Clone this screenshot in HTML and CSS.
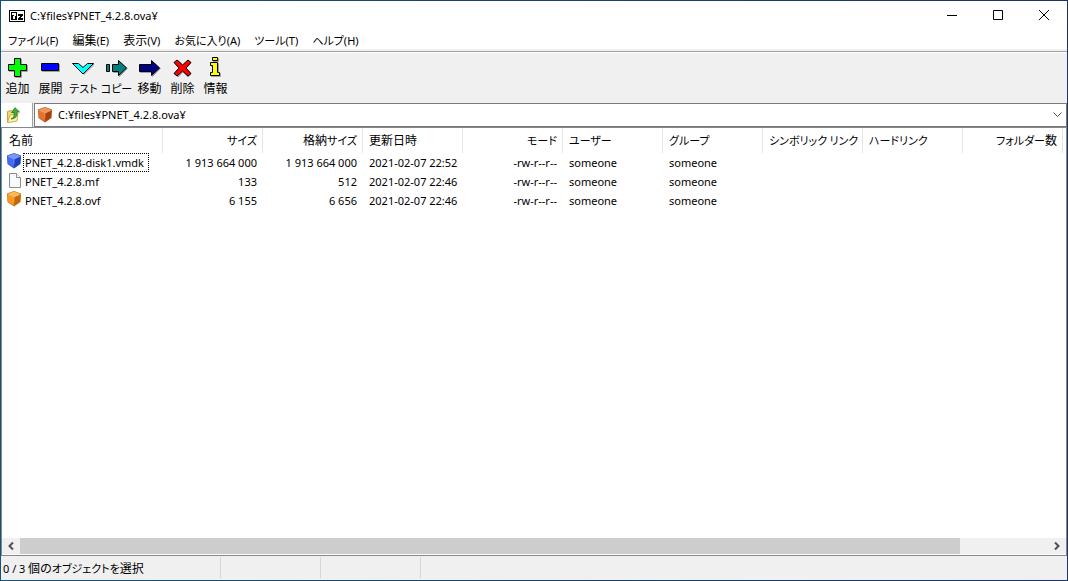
FILE: index.html
```html
<!DOCTYPE html>
<html lang="ja">
<head>
  <meta charset="utf-8">
  <title>C:¥files¥PNET_4.2.8.ova¥</title>
  <link rel="stylesheet" href="styles.css">
</head>
<body>
  <svg class="symbols" aria-hidden="true">
    <!-- coloured with the --top, --left, --right and --edge variables -->
    <symbol id="cube" viewBox="0 0 16 16">
      <path class="cube-edge" d="M8 0 15 2.5 14.5 11 8 15.5 1.5 11 1 2.5z"/>
      <path class="cube-top" d="M8 0.5 14.5 3 8 6 1.5 3z"/>
      <path class="cube-left" d="M1.5 3.5 7.8 6.5 7.8 14.5 2 10.5z"/>
      <path class="cube-right" d="M14.5 3.5 8.2 6.5 8.2 14.5 14 10.5z"/>
      <path class="cube-shine" d="M1.5 3.2 8 6.2 14.5 3.2M8 6.2V11"/>
    </symbol>
    <symbol id="file" viewBox="0 0 16 16">
      <path d="M3.5 1.5h7l4 4v10h-11z" fill="#fafafa" stroke="#8c8c8c"/>
      <path d="M10.5 1.5v4h4" fill="#fff" stroke="#8c8c8c"/>
    </symbol>
  </svg>

  <div class="window">
    <header class="titlebar">
      <svg class="app-icon" width="16" height="12" viewBox="0 0 16 12" shape-rendering="crispEdges">
        <path d="M0 0h16v12H0z" fill="#000"/>
        <path d="M1 1h14v10H1z" fill="#fff"/>
        <path d="M2 2h6v8H2zM9 4h5v2h-1v1h-1v1h2v2H9V8h1V7h1V6H9z" fill="#000"/>
        <path d="M3 3h4v3H6v3H4V6h1V5H3z" fill="#fff"/>
      </svg>
      <h1 class="title">C:¥files¥PNET_4.2.8.ova¥</h1>
      <div class="controls">
        <button type="button" aria-label="最小化">
          <svg width="12" height="12" viewBox="0 0 12 12"><path d="M1 5.5h10"/></svg>
        </button>
        <button type="button" aria-label="最大化">
          <svg width="12" height="12" viewBox="0 0 12 12"><path d="M1.5 0.5h9v9h-9z"/></svg>
        </button>
        <button type="button" aria-label="閉じる">
          <svg width="12" height="12" viewBox="0 0 12 12"><path d="M1 0l10 10M11 0L1 10"/></svg>
        </button>
      </div>
    </header>

    <nav class="menubar">
      <button type="button"><span class="kana">ファイル</span><span class="key">(F)</span></button>
      <button type="button">編集<span class="key">(E)</span></button>
      <button type="button">表示<span class="key">(V)</span></button>
      <button type="button"><span class="kana">お気に入り</span><span class="key">(A)</span></button>
      <button type="button"><span class="kana">ツール</span><span class="key">(T)</span></button>
      <button type="button"><span class="kana">ヘルプ</span><span class="key">(H)</span></button>
    </nav>

    <div class="toolbar">
      <button type="button">
        <svg width="23" height="23" viewBox="0 0 23 23">
          <path class="shadow" d="M9.5 3.5h6v6h6v6h-6v6h-6v-6h-6v-6h6z"/>
          <path class="shape" fill="#00ff00" d="M8.5 2.5h6v6h6v6h-6v6h-6v-6h-6v-6h6z"/>
        </svg>
        <span>追加</span>
      </button>
      <button type="button">
        <svg width="23" height="23" viewBox="0 0 23 23">
          <path class="shadow" d="M3.5 8.5h17v7h-17z"/>
          <path class="shape" fill="#0000ff" d="M2.5 7.5h17v7h-17z"/>
        </svg>
        <span>展開</span>
      </button>
      <button type="button">
        <svg width="23" height="23" viewBox="0 0 23 23">
          <path class="shadow" d="M2 8.5h5l5 4 5-4h5l-10 10z"/>
          <path class="shape" fill="#00ffff" d="M0.5 7.5h6l4.5 4 4.5-4h6L11 18z"/>
        </svg>
        <span class="kana">テスト</span>
      </button>
      <button type="button">
        <svg width="23" height="23" viewBox="0 0 23 23">
          <path class="shadow" d="M8.5 9.5h6v-4l8 7-8 8v-4h-6z"/>
          <path class="shape" fill="#008080" d="M1.5 8.5h3v7h-3zM7.5 8.5h6v-4l8 7.5-8 7.5v-4h-6z"/>
        </svg>
        <span class="kana">コピー</span>
      </button>
      <button type="button">
        <svg width="23" height="23" viewBox="0 0 23 23">
          <path class="shadow" d="M2.5 9.5h12v-4l8 7-8 8v-4h-12z"/>
          <path class="shape" fill="#000080" d="M1.5 8.5h12v-4l8 7.5-8 7.5v-4h-12z"/>
        </svg>
        <span>移動</span>
      </button>
      <button type="button">
        <svg width="23" height="23" viewBox="0 0 23 23">
          <path class="shadow" d="M4 7l3-3 5 5 5-5 3 3-5 5.5 5 5.5-3 3-5-5-5 5-3-3 5-5.5z"/>
          <path class="shape" fill="#ff0000" d="M3 6.5l3-2.5 5.5 5 5.5-5 3 2.5-5 5.5 5 5.5-3 2.5-5.5-5-5.5 5-3-2.5 5-5.5z"/>
        </svg>
        <span>削除</span>
      </button>
      <button type="button">
        <svg width="23" height="23" viewBox="0 0 23 23">
          <path class="shadow" d="M9.5 2.5h5v3h-5zM7.5 7.5h7v10h2v3h-9v-3h2v-7h-2z"/>
          <path class="shape" fill="#ffff00" d="M8.5 1.5h5v3h-5zM6.5 6.5h7v10h2v3h-9v-3h2v-7h-2z"/>
        </svg>
        <span>情報</span>
      </button>
    </div>

    <div class="addressbar">
      <button type="button" class="up" aria-label="上へ">
        <svg width="16" height="16" viewBox="0 0 16 16">
          <path d="M1.5 4.5l4-1 1.5 1.5 3-.5v9l-8.5 2z" fill="#f3d878" stroke="#c9a03c"/>
          <path d="M1.5 15.5l2.5-7.5 8-1.5-1 7.5z" fill="#fdf2b4" stroke="#d6b04a"/>
          <path d="M5 12c3-1 3.5-3.5 3-6.5H5.500L9 .7 13.500 5H11c.5 4-1 6.500-6 7z" fill="#43ad35" stroke="#1e7523" stroke-width=".8"/>
        </svg>
      </button>
      <label class="path">
        <svg class="cube orange" width="16" height="16"><use href="#cube"/></svg>
        <input type="text" value="C:¥files¥PNET_4.2.8.ova¥" aria-label="アドレス">
        <svg class="arrow" width="9" height="6" viewBox="0 0 9 6"><path d="M0.5 0.5l4 4 4-4"/></svg>
      </label>
    </div>

    <main class="list">
      <table>
        <colgroup>
          <col class="col-name">
          <col span="9">
        </colgroup>
        <thead>
          <tr>
            <th>名前</th>
            <th class="num kana">サイズ</th>
            <th class="num">格納<span class="kana">サイズ</span></th>
            <th>更新日時</th>
            <th class="num kana">モード</th>
            <th class="kana">ユーザー</th>
            <th class="kana">グループ</th>
            <th class="kana">シンボリック リンク</th>
            <th class="kana">ハードリンク</th>
            <th class="num"><span class="kana">フォルダー</span>数</th>
          </tr>
        </thead>
        <tbody>
          <tr>
            <td><div class="name"><svg class="cube blue" width="16" height="16"><use href="#cube"/></svg><span class="focused">PNET_4.2.8-disk1.vmdk</span></div></td>
            <td class="num">1 913 664 000</td>
            <td class="num">1 913 664 000</td>
            <td>2021-02-07 22:52</td>
            <td class="num">-rw-r--r--</td>
            <td>someone</td>
            <td>someone</td>
            <td></td>
            <td></td>
            <td></td>
          </tr>
          <tr>
            <td><div class="name"><svg width="16" height="16"><use href="#file"/></svg><span>PNET_4.2.8.mf</span></div></td>
            <td class="num">133</td>
            <td class="num">512</td>
            <td>2021-02-07 22:46</td>
            <td class="num">-rw-r--r--</td>
            <td>someone</td>
            <td>someone</td>
            <td></td>
            <td></td>
            <td></td>
          </tr>
          <tr>
            <td><div class="name"><svg class="cube amber" width="16" height="16"><use href="#cube"/></svg><span>PNET_4.2.8.ovf</span></div></td>
            <td class="num">6 155</td>
            <td class="num">6 656</td>
            <td>2021-02-07 22:46</td>
            <td class="num">-rw-r--r--</td>
            <td>someone</td>
            <td>someone</td>
            <td></td>
            <td></td>
            <td></td>
          </tr>
        </tbody>
      </table>
      <div class="scrollbar">
        <button type="button" aria-label="左へスクロール">
          <svg width="6" height="8" viewBox="0 0 6 8"><path d="M5 0.5L1.5 4 5 7.5"/></svg>
        </button>
        <div class="track"><div class="thumb"></div></div>
        <button type="button" aria-label="右へスクロール">
          <svg width="6" height="8" viewBox="0 0 6 8"><path d="M1 0.5L4.5 4 1 7.5"/></svg>
        </button>
      </div>
    </main>

    <footer class="statusbar">
      <div class="status-main"><span class="key">0 / 3</span> 個の<span class="kana">オブジェクトを</span>選択</div>
      <div class="status-part"></div>
      <div class="status-part"></div>
      <div class="status-rest"></div>
    </footer>
  </div>
</body>
</html>
```
FILE: styles.css
```css
* {
  box-sizing: border-box;
}

body {
  margin: 0;
  color: #000;
  font: 11px/16px "Noto Sans", "Noto Sans CJK JP", sans-serif;
}

button, input {
  margin: 0;
  padding: 0;
  border: 0;
  background: none;
  color: inherit;
  font: inherit;
}

svg {
  display: block;
  flex: none;
}

.symbols {
  position: absolute;
  width: 0;
  height: 0;
}

.window {
  display: flex;
  flex-direction: column;
  min-height: 100vh;
  padding: 1px;
  background: linear-gradient(90deg, #1a5276, #1b3560);
}

/* title */
.titlebar {
  display: flex;
  align-items: center;
  height: 29px;
  padding-left: 8px;
  background: #fff;
}

.title {
  flex: 1;
  margin: 0 5px;
  font-size: 11px;
  font-weight: normal;
}

.controls {
  display: flex;
}

.controls button {
  display: flex;
  align-items: center;
  justify-content: center;
  width: 46px;
  height: 29px;
}

.controls path {
  fill: none;
  stroke: #000;
}

/* menu */
.menubar {
  display: flex;
  height: 21px;
  background: #fff;
  border-bottom: 2px solid #f0f0f0;
}

.menubar button {
  padding: 1px 7px 0;
}

.menubar, .toolbar, .statusbar, th {
  font-family: "Noto Sans CJK JP", sans-serif;
  font-size: 12px;
  font-feature-settings: "palt";
}

.kana {
  font-size: 11px;
}

.key {
  font-family: "Noto Sans", sans-serif;
  font-size: 11px;
}

/* toolbar */
.toolbar {
  display: flex;
  height: 52px;
  padding-top: 4px;
  background: #f0f0f0;
  border-top: 1px solid #a0a0a0;
  box-shadow: inset 0 1px #fff;
}

.toolbar button {
  display: flex;
  flex-direction: column;
  align-items: center;
  gap: 1px;
  width: 33px;
  white-space: nowrap;
}

.shape {
  stroke: #000;
}

.shadow {
  fill: #a0a0a0;
  stroke: #a0a0a0;
}

/* address */
.addressbar {
  display: flex;
  gap: 1px;
  height: 24px;
  background: #f0f0f0;
}

.up {
  width: 32px;
  padding-left: 5px;
  background: #fff;
  border-right: 1px solid #a0a0a0;
}

.path {
  display: flex;
  flex: 1;
  align-items: center;
  gap: 5px;
  padding: 0 4px 0 2px;
  background: #fff;
  border: 1px solid #7a7a7a;
}

.path input {
  flex: 1;
  min-width: 0;
  outline: 0;
}

.arrow {
  fill: none;
  stroke: #505050;
}

.cube-edge {
  fill: var(--edge);
}

.cube-top {
  fill: var(--top);
}

.cube-left {
  fill: var(--left);
}

.cube-right {
  fill: var(--right);
}

.cube-shine {
  fill: none;
  stroke: #fff;
  stroke-opacity: 0.3;
}

.orange {
  --edge: #b9561a;
  --top: #f2975a;
  --left: #e8722a;
  --right: #a8400c;
}

.amber {
  --edge: #c07416;
  --top: #ffbb50;
  --left: #f99a1c;
  --right: #c4680a;
}

.blue {
  --edge: #2b4cc4;
  --top: #7396ff;
  --left: #3f6cf2;
  --right: #1f3eb8;
}

/* file list */
.list {
  display: flex;
  flex: 1;
  flex-direction: column;
  justify-content: space-between;
  padding: 0 0 1px;
  overflow: hidden;
  background: #fff;
  border: 1px solid #828790;
}

table {
  width: 1061px;
  table-layout: fixed;
  border-collapse: collapse;
}

.col-name {
  width: 161px;
}

th, td {
  padding: 0 6px;
  text-align: left;
  font-weight: normal;
  white-space: nowrap;
}

th {
  height: 25px;
  padding-bottom: 2px;
  background: linear-gradient(#e5e5e5, #e5e5e5) right / 1px 100% no-repeat;
}

td {
  height: 19px;
}

th:first-child {
  padding-left: 7px;
}

td:first-child {
  padding-left: 4px;
}

.num {
  text-align: right;
}

.name {
  display: flex;
  gap: 1px;
}

.name span {
  height: 19px;
  padding: 0 4px 0 1px;
  border: 1px dotted transparent;
  line-height: 17px;
}

.name .focused {
  border-color: #000;
}

.scrollbar {
  display: flex;
  height: 16px;
  background: #f0f0f0;
}

.scrollbar button {
  display: flex;
  align-items: center;
  justify-content: center;
  width: 18px;
}

.scrollbar path {
  fill: none;
  stroke: #505050;
  stroke-width: 2;
}

.track {
  display: grid;
  flex: 1;
  grid-template-columns: 32fr 3fr;
}

.thumb {
  background: #cdcdcd;
}

/* status */
.statusbar {
  display: flex;
  height: 24px;
  padding: 1px 0 2px;
  line-height: 21px;
  background: #f0f0f0;
}

.status-main {
  width: 220px;
  padding-left: 2px;
  border-right: 1px solid #d7d7d7;
}

.status-part {
  width: 100px;
  border-right: 1px solid #d7d7d7;
}

.status-rest {
  flex: 1;
}
```
